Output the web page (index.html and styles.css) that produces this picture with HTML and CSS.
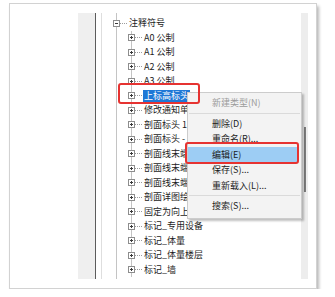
FILE: index.html
```html
<!DOCTYPE html>
<html lang="zh-CN">
<head>
    <meta charset="UTF-8">
    <meta name="viewport" content="width=device-width, initial-scale=1.0">
    <title>注释符号</title>
    <link rel="stylesheet" href="styles.css">
</head>
<body>

    <div class="kartu">
        <div class="strip"></div>

        <div class="panel">
            <div class="pohon">
                <div class="baris"><span class="kotak minus"></span><span class="garis"></span><span class="label">注释符号</span></div>
                <div class="anak">
                    <div class="baris"><span class="kotak"></span><span class="garis"></span><span class="label">A0 公制</span></div>
                    <div class="baris"><span class="kotak"></span><span class="garis"></span><span class="label">A1 公制</span></div>
                    <div class="baris"><span class="kotak"></span><span class="garis"></span><span class="label">A2 公制</span></div>
                    <div class="baris"><span class="kotak"></span><span class="garis"></span><span class="label">A3 公制</span></div>
                    <div class="baris"><span class="kotak"></span><span class="garis"></span><span class="label dipilih">上标高标头</span></div>
                    <div class="baris"><span class="kotak"></span><span class="garis"></span><span class="label">修改通知单</span></div>
                    <div class="baris"><span class="kotak"></span><span class="garis"></span><span class="label">剖面标头 1</span></div>
                    <div class="baris"><span class="kotak"></span><span class="garis"></span><span class="label">剖面标头 -</span></div>
                    <div class="baris"><span class="kotak"></span><span class="garis"></span><span class="label">剖面线末端</span></div>
                    <div class="baris"><span class="kotak"></span><span class="garis"></span><span class="label">剖面线末端</span></div>
                    <div class="baris"><span class="kotak"></span><span class="garis"></span><span class="label">剖面线末端</span></div>
                    <div class="baris"><span class="kotak"></span><span class="garis"></span><span class="label">剖面详图绘</span></div>
                    <div class="baris"><span class="kotak"></span><span class="garis"></span><span class="label">固定为向上</span></div>
                    <div class="baris"><span class="kotak"></span><span class="garis"></span><span class="label">标记_专用设备</span></div>
                    <div class="baris"><span class="kotak"></span><span class="garis"></span><span class="label">标记_体量</span></div>
                    <div class="baris"><span class="kotak"></span><span class="garis"></span><span class="label">标记_体量楼层</span></div>
                    <div class="baris"><span class="kotak"></span><span class="garis"></span><span class="label">标记_墙</span></div>
                </div>
            </div>

            <div class="scroll"><div class="thumb"></div></div>

            <div class="menu">
                <div class="item mati">新建类型(N)</div>
                <div class="pemisah"></div>
                <div class="item">删除(D)</div>
                <div class="item">重命名(R)...</div>
                <div class="item aktif">编辑(E)</div>
                <div class="item">保存(S)...</div>
                <div class="item">重新载入(L)...</div>
                <div class="pemisah"></div>
                <div class="item">搜索(S)...</div>
            </div>

            <div class="tanda tanda-pilih"></div>
            <div class="tanda tanda-edit"></div>
        </div>
    </div>

</body>
</html>
```

FILE: styles.css
```css
/* --- HALAMAN --- */
body {
    margin: 0;
    background-color: #ffffff;
    font-family: "Noto Sans CJK SC", "Noto Sans", sans-serif;
    font-size: 9px;
    color: #1c1c1c;
}

.kartu {
    display: flex;
    box-sizing: border-box;
    width: 308px;
    height: 286px;
    margin: 3px 0 0 9px;
    padding: 9px 8px 9px 68px;
    background-color: #ffffff;
    border: 1px solid #d2d2d2;
    box-shadow: 2px 3px 3px rgba(0, 0, 0, 0.28);
}

.strip {
    width: 17px;
    background-color: #efefef;
    border-right: 1px solid #5c5c5c;
}

.panel {
    position: relative;
    flex: 1;
    display: flex;
    margin-left: 5px;
    border-left: 1px solid #dedede;
    overflow: hidden;
}

/* --- POHON --- */
.pohon {
    flex: 1;
    padding: 3px 0 0 11px;
    background: linear-gradient(#c4c4c4, #c4c4c4) 14px 0 / 1px 100% no-repeat;
}

.anak {
    margin-left: 15px;
    background: linear-gradient(#c4c4c4, #c4c4c4) 3px 0 / 1px 100% no-repeat;
}

.baris {
    display: flex;
    align-items: center;
    height: 14.5px;
    white-space: nowrap;
}

.kotak {
    display: grid;
    place-items: center;
    box-sizing: border-box;
    width: 7px;
    height: 7px;
    border: 1px solid #8d8d8d;
    background-color: #ffffff;
}

.kotak::before,
.kotak::after {
    content: "";
    grid-area: 1 / 1;
    background-color: #3a3a3a;
}

.kotak::before {
    width: 3px;
    height: 1px;
}

.kotak::after {
    width: 1px;
    height: 3px;
}

.kotak.minus::after {
    display: none;
}

.garis {
    width: 7px;
    border-top: 1px dotted #9c9c9c;
}

.label {
    margin-left: 1px;
    padding: 0 1px;
    line-height: 12px;
}

.dipilih {
    background-color: #1f78d6;
    color: #ffffff;
}

/* --- SCROLLBAR --- */
.scroll {
    width: 7px;
    background-color: #ededed;
}

.thumb {
    width: 2px;
    height: 65px;
    margin: 114px 0 0 3px;
    background-color: #7c7c7c;
}

/* --- MENU KONTEKS --- */
.menu {
    position: absolute;
    left: 85px;
    top: 79px;
    box-sizing: border-box;
    width: 115px;
    padding: 2px 0 4px 0;
    background-color: #f3f3f3;
    border: 1px solid #cccccc;
    box-shadow: 2px 2px 2px rgba(0, 0, 0, 0.25);
}

.item {
    height: 15.5px;
    line-height: 15.5px;
    padding-left: 24px;
    margin-right: 4px;
}

.mati {
    color: #9b9b9b;
}

.aktif {
    background-color: #9dcdf4;
}

.pemisah {
    height: 1px;
    margin: 2px 1px;
    background-color: #dadada;
}

/* --- KOTAK MERAH --- */
.tanda {
    position: absolute;
    box-sizing: border-box;
    border: 2px solid #e63331;
    border-radius: 3px;
}

.tanda-pilih {
    left: 16px;
    top: 70px;
    width: 82px;
    height: 21px;
}

.tanda-edit {
    left: 83px;
    top: 129px;
    width: 114px;
    height: 22px;
}
```
